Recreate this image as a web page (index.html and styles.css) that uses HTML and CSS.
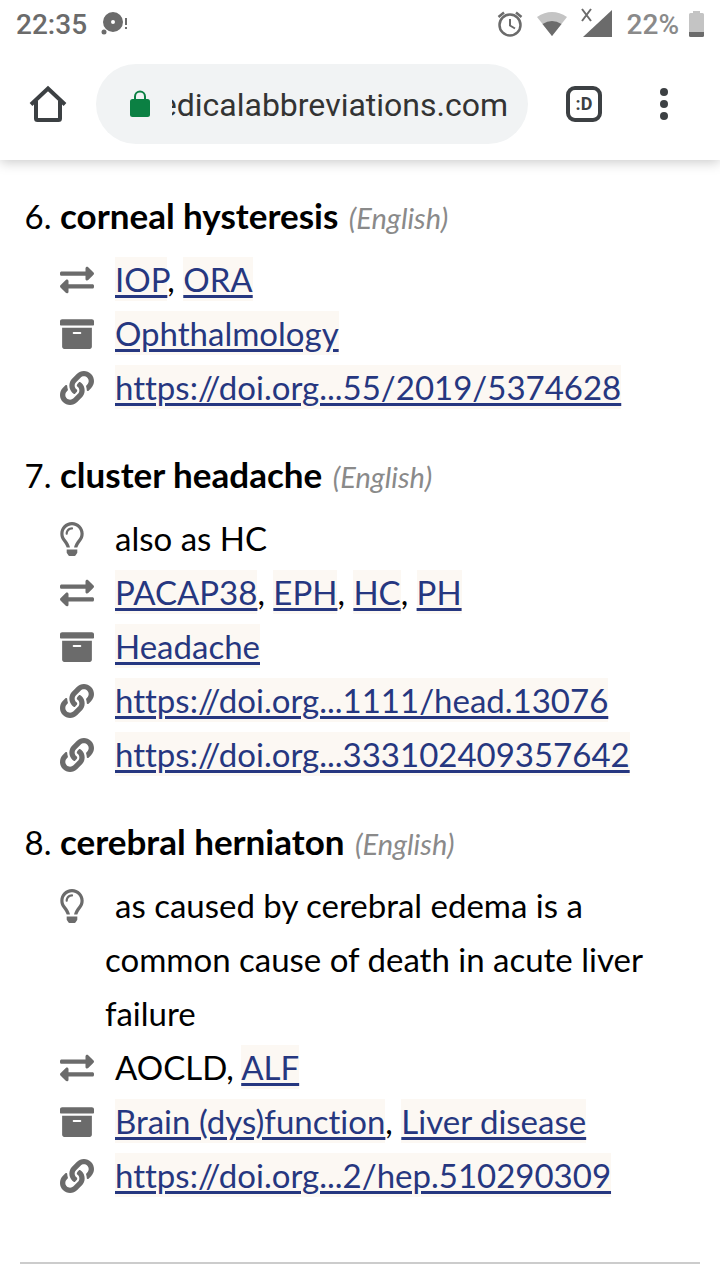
FILE: index.html
```html
<!DOCTYPE html>
<html lang="en">
<head>
  <meta charset="UTF-8" />
  <meta name="viewport" content="width=device-width, initial-scale=1.0" />
  <title>Medical abbreviations</title>
  <link rel="stylesheet" href="styles.css">
</head>
<body>

  <!-- Shared icon shapes -->
  <svg class="sprite" aria-hidden="true">
    <symbol id="exchange" viewBox="0 0 512 512"><path d="M0 168v-16c0-13.255 10.745-24 24-24h360V80c0-21.367 25.899-32.042 40.971-16.971l80 80c9.372 9.373 9.372 24.569 0 33.941l-80 80C409.956 271.982 384 261.456 384 240v-48H24c-13.255 0-24-10.745-24-24zm488 152H128v-48c0-21.314-25.862-32.08-40.971-16.971l-80 80c-9.372 9.373-9.372 24.569 0 33.941l80 80C102.057 463.997 128 453.437 128 432v-48h360c13.255 0 24-10.745 24-24v-16c0-13.255-10.745-24-24-24z"/></symbol>
    <symbol id="archive" viewBox="0 0 512 512"><path d="M32 448c0 17.7 14.3 32 32 32h384c17.7 0 32-14.3 32-32V160H32v288zm160-212c0-6.6 5.4-12 12-12h104c6.6 0 12 5.4 12 12v8c0 6.6-5.4 12-12 12H204c-6.6 0-12-5.4-12-12v-8zM480 32H32C14.3 32 0 46.3 0 64v48c0 8.8 7.2 16 16 16h480c8.8 0 16-7.2 16-16V64c0-17.7-14.3-32-32-32z"/></symbol>
    <symbol id="link" viewBox="0 0 512 512"><path d="M326.612 185.391c59.747 59.809 58.927 155.698.36 214.59-.11.12-.24.25-.36.37l-67.2 67.2c-59.27 59.27-155.699 59.262-214.96 0-59.27-59.26-59.27-155.7 0-214.96l37.106-37.106c9.84-9.84 26.786-3.3 27.294 10.606.648 17.722 3.826 35.527 9.69 52.721 1.986 5.822.567 12.262-3.783 16.612l-13.087 13.087c-28.026 28.026-28.905 73.66-1.155 101.96 28.024 28.579 74.086 28.749 102.325.51l67.2-67.19c28.191-28.191 28.073-73.757 0-101.83-3.701-3.694-7.429-6.564-10.341-8.569a16.037 16.037 0 0 1-6.947-12.606c-.396-10.567 3.348-21.456 11.698-29.806l21.054-21.055c5.521-5.521 14.182-6.199 20.584-1.731a152.482 152.482 0 0 1 20.522 17.197zM467.547 44.449c-59.261-59.262-155.69-59.27-214.96 0l-67.2 67.2c-.12.12-.25.25-.36.37-58.566 58.892-59.387 154.781.36 214.59a152.454 152.454 0 0 0 20.521 17.196c6.402 4.468 15.064 3.789 20.584-1.731l21.054-21.055c8.35-8.35 12.094-19.239 11.698-29.806a16.037 16.037 0 0 0-6.947-12.606c-2.912-2.005-6.64-4.875-10.341-8.569-28.073-28.073-28.191-73.639 0-101.83l67.2-67.19c28.239-28.239 74.3-28.069 102.325.51 27.75 28.3 26.872 73.934-1.155 101.96l-13.087 13.087c-4.35 4.35-5.769 10.79-3.783 16.612 5.864 17.194 9.042 34.999 9.69 52.721.509 13.906 17.454 20.446 27.294 10.606l37.106-37.106c59.271-59.259 59.271-155.699.001-214.959z"/></symbol>
    <symbol id="bulb" viewBox="0 0 352 512"><path d="M176 80c-52.94 0-96 43.06-96 96 0 8.84 7.16 16 16 16s16-7.16 16-16c0-35.3 28.72-64 64-64 8.84 0 16-7.16 16-16s-7.16-16-16-16zM96.06 459.17c0 3.15.93 6.22 2.68 8.84l24.51 36.84c2.97 4.46 7.97 7.14 13.32 7.14h78.85c5.36 0 10.36-2.68 13.32-7.14l24.51-36.84c1.74-2.62 2.67-5.7 2.68-8.84l.05-43.18H96.02l.04 43.18zM176 0C73.72 0 0 82.97 0 176c0 44.37 16.45 84.85 43.56 115.78 16.64 18.99 42.74 58.8 52.42 92.16v.06h48v-.12c-.01-4.77-.72-9.51-2.15-14.07-5.59-17.81-22.82-64.77-62.17-109.67-20.54-23.43-31.52-53.15-31.61-84.14-.2-73.64 59.67-128 127.95-128 70.58 0 128 57.42 128 128 0 30.97-11.24 60.85-31.65 84.14-39.11 44.61-56.42 91.47-62.1 109.46a47.507 47.507 0 0 0-2.22 14.3v.1h48v-.05c9.68-33.37 35.78-73.18 52.42-92.16C335.55 260.85 352 220.37 352 176 352 78.8 273.2 0 176 0z"/></symbol>
  </svg>

  <header class="browser">
    <div class="status-bar">
      <span class="clock">22:35</span>
      <svg class="notice" width="28" height="28" viewBox="0 0 28 28">
        <path fill-rule="evenodd" d="M12 1a10 10 0 1 1 0 20a10 10 0 0 1 0-20zm0 8a2 2 0 1 0 0 4a2 2 0 0 0 0-4z"/>
        <circle cx="3" cy="21" r="2.5"/>
        <path d="M24 7h2v7h-2zM24 16h2v2h-2z"/>
      </svg>
      <div class="status-icons">
        <svg width="26" height="28" viewBox="0 0 26 28" fill="none" stroke="#6b6b6b">
          <circle cx="13" cy="14" r="10.500" stroke-width="2.500"/>
          <path stroke-width="2" d="M13 8v6.500l5 3"/>
          <path stroke-width="2.500" d="M1.500 6L7 1.500M24.500 6L19 1.500"/>
        </svg>
        <svg width="30" height="28" viewBox="0 0 30 28">
          <path fill="#c4c4c4" d="M0 6Q15-4 30 6L15 25z"/>
          <path d="M5.500 13q9.500-6 19 0L15 25z"/>
        </svg>
        <svg class="signal" width="32" height="28" viewBox="0 0 32 28">
          <path d="M2 26L31-1v27z"/>
          <path fill="none" stroke="#6b6b6b" stroke-width="2" d="M1-2l9 12M10-2L1 10"/>
        </svg>
        <span class="percent">22%</span>
        <svg width="15" height="28" viewBox="0 0 15 28">
          <path fill="#c4c4c4" d="M4 0h7v2h2.500q1.500 0 1.500 1.500V21H0V3.500Q0 2 1.500 2H4z"/>
          <path d="M0 21h15v3.500q0 1.500-1.500 1.500h-12Q0 26 0 24.500z"/>
        </svg>
      </div>
    </div>

    <div class="toolbar">
      <button type="button" class="home" aria-label="Home">
        <svg width="40" height="40" viewBox="0 0 40 40" fill="none" stroke="#3c4043" stroke-width="4">
          <path d="M3 20.500L20 4.500l17 16"/>
          <path d="M8 17v17.500q0 1.500 1.500 1.500h21q1.500 0 1.500-1.500V17"/>
        </svg>
      </button>
      <div class="address">
        <svg width="20" height="28" viewBox="0 0 20 28">
          <path fill="none" stroke="#0b8043" stroke-width="2" d="M5 10V6.500a5 5 0 0 1 10 0V10"/>
          <rect fill="#0b8043" y="9" width="20" height="18" rx="2.500"/>
        </svg>
        <input type="text" class="url" aria-label="Address" value="edicalabbreviations.com">
      </div>
      <button type="button" class="tool" aria-label="Tabs"><span class="tabs">:D</span></button>
      <button type="button" class="tool" aria-label="Menu">
        <svg width="8" height="32" viewBox="0 0 8 32" fill="#3c4043">
          <circle cx="4" cy="4" r="4"/><circle cx="4" cy="16" r="4"/><circle cx="4" cy="28" r="4"/>
        </svg>
      </button>
    </div>
  </header>

  <main class="content">
    <ol class="meanings" start="6">
      <li>
        <h2>corneal hysteresis <em>(English)</em></h2>
        <ul class="details">
          <li><svg class="icon"><use href="#exchange"/></svg><a href="#">IOP</a>, <a href="#">ORA</a></li>
          <li><svg class="icon"><use href="#archive"/></svg><a href="#">Ophthalmology</a></li>
          <li><svg class="icon"><use href="#link"/></svg><a href="#">https://doi.org...55/2019/5374628</a></li>
        </ul>
      </li>
      <li>
        <h2>cluster headache <em>(English)</em></h2>
        <ul class="details">
          <li><svg class="icon bulb"><use href="#bulb"/></svg>also as HC</li>
          <li><svg class="icon"><use href="#exchange"/></svg><a href="#">PACAP38</a>, <a href="#">EPH</a>, <a href="#">HC</a>, <a href="#">PH</a></li>
          <li><svg class="icon"><use href="#archive"/></svg><a href="#">Headache</a></li>
          <li><svg class="icon"><use href="#link"/></svg><a href="#">https://doi.org...1111/head.13076</a></li>
          <li><svg class="icon"><use href="#link"/></svg><a href="#">https://doi.org...333102409357642</a></li>
        </ul>
      </li>
      <li>
        <h2>cerebral herniaton <em>(English)</em></h2>
        <ul class="details">
          <li><svg class="icon bulb"><use href="#bulb"/></svg>as caused by cerebral edema is a common cause of death in acute liver failure</li>
          <li><svg class="icon"><use href="#exchange"/></svg>AOCLD, <a href="#">ALF</a></li>
          <li><svg class="icon"><use href="#archive"/></svg><a href="#">Brain (dys)function</a>, <a href="#">Liver disease</a></li>
          <li><svg class="icon"><use href="#link"/></svg><a href="#">https://doi.org...2/hep.510290309</a></li>
        </ul>
      </li>
    </ol>
    <hr>
  </main>

</body>
</html>
```
FILE: styles.css
```css
* {
  box-sizing: border-box;
}
body {
  margin: 0;
  background-color: #fff;
  color: #000;
  font-family: Lato, "Noto Sans", sans-serif;
  font-size: 33px;
  font-variant-ligatures: none;
  line-height: 54px;
}
.sprite {
  display: none;
}
/* Browser bars */
.browser {
  font-family: Roboto, sans-serif;
  background-color: #fff;
  box-shadow: 0 2px 12px rgba(0, 0, 0, 0.22);
}
.status-bar {
  display: flex;
  align-items: center;
  height: 48px;
  padding: 2px 16px 0;
  font-size: 28px;
  font-weight: 500;
  color: #6b6b6b;
  fill: #6b6b6b;
}
.notice {
  margin-left: 14px;
}
.status-icons {
  display: flex;
  align-items: center;
  gap: 14px;
  margin-left: auto;
}
.signal {
  overflow: visible;
}
.percent {
  margin-right: -4px;
  color: #8a8a8a;
}
.toolbar {
  display: flex;
  align-items: center;
  padding: 16px 16px 16px 0;
}
.toolbar button {
  display: flex;
  flex: none;
  align-items: center;
  justify-content: center;
  height: 80px;
  padding: 0;
  border: none;
  background: none;
  color: #3c4043;
}
.toolbar .home {
  width: 96px;
}
.toolbar .tool {
  width: 80px;
}
.address {
  display: flex;
  flex: 1;
  align-items: center;
  gap: 22px;
  min-width: 0;
  height: 80px;
  margin-right: 16px;
  padding: 0 20px 0 34px;
  border-radius: 40px;
  background-color: #f1f3f4;
}
/* Long addresses lose their start, not their end */
.url {
  flex: 1;
  min-width: 0;
  padding: 2px 0 0;
  border: none;
  background: none;
  color: #333;
  font-family: inherit;
  font-size: 32px;
  direction: rtl;
}
.tabs {
  width: 36px;
  height: 36px;
  border: 4px solid #3c4043;
  border-radius: 9px;
  font: bold 18px/28px Roboto, sans-serif;
}
/* List of meanings */
.content {
  padding: 28px 20px 0;
}
.meanings {
  margin: 0 0 60px;
  padding-left: 40px;
}
.meanings > li + li {
  margin-top: 33px;
}
h2 {
  margin: 0 0 10px;
  font-size: 35px;
}
h2 em {
  margin-left: 2px;
  font-size: 29px;
  font-weight: normal;
  line-height: 1;
  color: #8a8a8a;
}
.details {
  margin: 0;
  padding-left: 45px;
  list-style: none;
  text-indent: -45px;
}
.icon {
  width: 34px;
  height: 34px;
  margin-right: 21px;
  vertical-align: -5px;
  fill: #6b6b6b;
}
.bulb {
  width: 24px;
  margin-right: 31px;
}
a {
  padding: 2px 0;
  background-color: #fcf8f3;
  color: #263780;
  text-decoration-thickness: 3px;
  text-underline-offset: 3px;
}
hr {
  margin: 0;
  border: none;
  border-top: 2px solid #ccc;
}
```
